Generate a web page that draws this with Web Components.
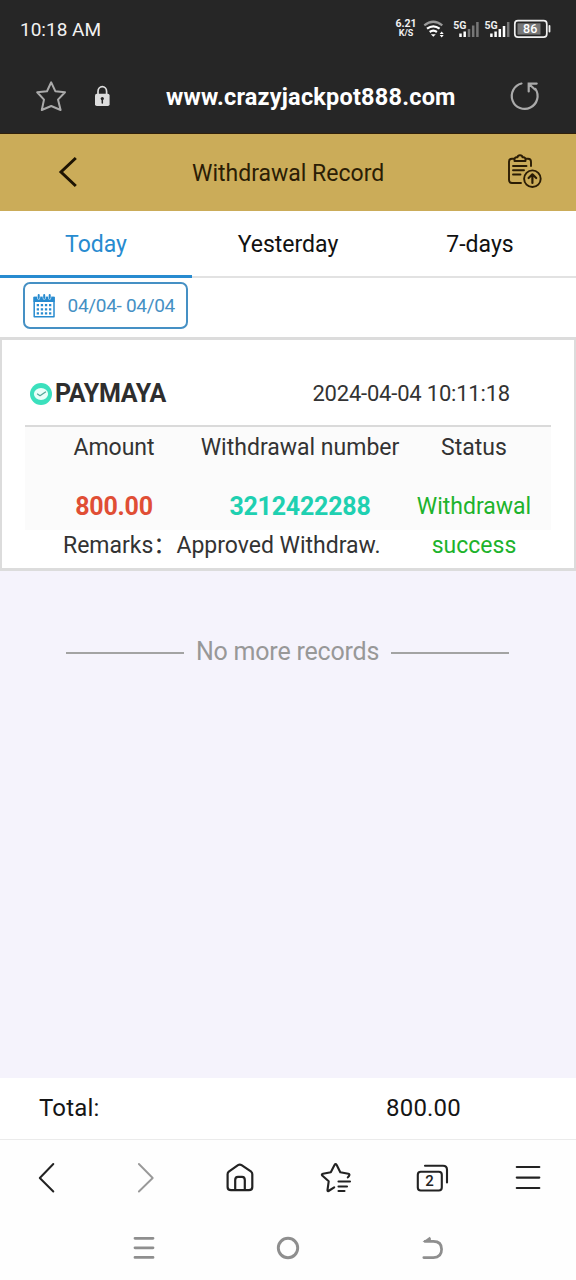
<!DOCTYPE html>
<html lang="en">
<head>
<meta charset="utf-8">
<title>Withdrawal Record</title>
<style>
html,body{margin:0;padding:0}
body{width:576px;height:1280px;overflow:hidden;font-family:Roboto,"Noto Sans CJK SC",sans-serif;background:#f5f3fc}
</style>
</head>
<body>
<record-app></record-app>
<script>
const define = (name, html) => {
  const t = document.createElement('template');
  t.innerHTML = html;
  customElements.define(name, class extends HTMLElement {
    constructor() {
      super();
      this.attachShadow({mode: 'open'}).appendChild(t.content.cloneNode(true));
    }
  });
};

const ICONS = {
  star: ['35 80 32 32', '<path d="M51.2 82.3L55.3 91.2 65 92.2 58 99.6 60.6 110 51.2 106 41.8 110 44 99.6 37.2 92.2 47 91.2Z" stroke="#aaa" stroke-width="2"/>'],
  lock: ['93 84 18 24', '<path d="M98 95V91.5a4.3 4.8 0 0 1 8.600 0V95" stroke="#ddd" stroke-width="1.700"/><rect x="95" y="93.800" width="14.600" height="12.200" rx="1.800" fill="#ddd"/><circle cx="102.300" cy="98.600" r="1.600" fill="#262626"/><path d="M102.300 98.500V103" stroke="#262626" stroke-width="1.500"/>'],
  reload: ['508 79 34 34', '<path d="M521.500 83.500A12.900 12.900 0 1 0 535.500 89" stroke="#aaa" stroke-width="2.200"/><path d="M528.700 91.500V83.600H536.700M529 84L535 89.500" stroke="#aaa" stroke-width="2.200" stroke-linejoin="miter"/>'],
  back: ['56 155 24 34', '<path d="M75.800 158L61 172 75.800 186" stroke="#1d1303" stroke-width="3" stroke-linecap="butt" stroke-linejoin="miter"/>'],
  upload: ['505 151 40 40', '<g stroke="#2b1d05" stroke-width="1.900"><path d="M514 157.700H512a3 3 0 0 0-3 3V179a3 3 0 0 0 3 3H521M526 157.700H528a3 3 0 0 1 3 3V165"/><path d="M514.500 160V158.500q0-2 2.200-2.200H517.500q.3-2 2.500-2 2.200 0 2.500 2H523.300q2.200.2 2.200 2.200V160Z"/><path d="M513 165H526.500M513 169.300H524M513 173.500H520.500"/><circle cx="532.400" cy="177.700" r="8.300"/><path d="M532.400 182V173.600M528.600 177L532.400 173.300 536.200 177" stroke-width="2.200"/></g>'],
  calendar: ['32 293 24 26', '<path d="M34.200 297.500H54V316.800H34.200Z" stroke="#278bd0" stroke-width="1.500"/><path d="M33.500 296.800H54.700V302H33.500Z" fill="#278bd0"/><path d="M38.700 295V298M44.200 295V298M49.700 295V298" stroke="#fff" stroke-width="3"/><path d="M38.700 295V298M44.200 295V298M49.700 295V298" stroke="#278bd0" stroke-width="2"/><path d="M36.700 305.200H53M36.700 309.300H53M36.700 313.400H53" stroke="#278bd0" stroke-width="2.300" stroke-dasharray="2.300 1.800" stroke-linecap="butt"/>'],
  maya: ['29 382 24 24', '<circle cx="41" cy="394" r="11" fill="#3be0bd"/><ellipse cx="41" cy="394" rx="7.100" ry="6" fill="#eafffa"/><path d="M37.500 394L40 395.700 45.500 392" stroke="#57a799" stroke-width="1.300"/>'],
  wifi: ['423 19 22 20', '<g stroke-linecap="butt"><path d="M424.300 25.300Q433.300 18.200 442.300 25.300" stroke="#999" stroke-width="2.200"/><path d="M427 28.700Q433.300 24 439.600 28.700M429.700 32Q433.300 29.300 436.900 32" stroke="#fff" stroke-width="2.200"/></g><path d="M430.800 34.200H435.800L433.300 36.800Z" fill="#fff"/><path d="M439.700 34L441.700 31.500 443.700 34ZM439.700 35L441.700 37.500 443.700 35Z" fill="#fff"/>'],
  signal1: ['453 18 27 20', '<text x="453.300" y="28.800" font-size="10.500" font-weight="700" fill="#eee" textLength="13.200" lengthAdjust="spacingAndGlyphs">5G</text><g stroke-width="2.500" stroke-linecap="butt"><path d="M460.500 33.500V37M464.700 31.500V37" stroke="#fff"/><path d="M469 29V37M473.200 25.500V37M477.400 22V37" stroke="#777"/></g>'],
  signal2: ['484 18 27 20', '<text x="484.500" y="28.800" font-size="10.500" font-weight="700" fill="#eee" textLength="13.200" lengthAdjust="spacingAndGlyphs">5G</text><g stroke-width="2.500" stroke-linecap="butt"><path d="M491.400 33.500V37M495.600 31.500V37M499.800 29V37M504 26V37" stroke="#fff"/><path d="M508.200 22V37" stroke="#777"/></g>'],
  battery: ['513 19 38 20', '<rect x="514.800" y="20.700" width="32" height="16.500" rx="3.200" stroke="#eee" stroke-width="1.700"/><rect x="517.500" y="23.300" width="23" height="11.300" fill="#777"/><path d="M549.500 26V31.500" stroke="#eee" stroke-width="1.800"/><text x="530.200" y="33.400" font-size="12.500" font-weight="500" fill="#fff" text-anchor="middle">86</text>'],
  prev: ['36 1161 20 34', '<path d="M53.300 1164L39.800 1178 53.300 1191.500" stroke="#222" stroke-width="2"/>'],
  next: ['136 1161 20 34', '<path d="M138.900 1164L152.700 1178 138.900 1191.500" stroke="#999" stroke-width="1.900"/>'],
  home: ['224 1162 32 32', '<g stroke="#222" stroke-width="2.200"><path d="M227.600 1174.200Q227.600 1172.700 228.800 1171.700L238 1165.200Q239.800 1164 241.600 1165.200L251.200 1171.700Q252.300 1172.700 252.300 1174.200V1187Q252.300 1190.200 249 1190.200H231Q227.600 1190.200 227.600 1187Z"/><path d="M235.200 1190V1180Q235.200 1176.800 238 1176.800H242Q244.800 1176.800 244.800 1180V1190"/></g>'],
  bookmarks: ['319 1161 34 34', '<g stroke="#222" stroke-width="2.100"><path d="M334.200 1187.300L328.500 1191Q327.300 1191.500 327.500 1190L328.700 1181.300 322.200 1175.500Q321.200 1174.200 323 1173.700L330.800 1172.300 334.500 1165Q335.600 1163.300 336.700 1165L340.300 1172.300 348.300 1173.700Q350.200 1174.200 349 1176L347.800 1177.400"/><path d="M338.500 1181.500H350M338.500 1186.500H347M338.500 1191H344.500"/></g>'],
  tabs: ['414 1162 36 32', '<g stroke="#222" stroke-width="2.100"><rect x="417.800" y="1171.800" width="24" height="18.700" rx="3"/><path d="M425 1165.700H443Q447 1165.700 447 1169.700V1182.500"/></g><text x="429.600" y="1186.300" font-size="15" font-weight="500" fill="#222" text-anchor="middle">2</text>'],
  menu: ['513 1163 30 30', '<path d="M516.800 1167H539.300M516.800 1177.600H539.300M516.800 1188H539.300" stroke="#222" stroke-width="2.200"/>'],
  recents: ['132 1234 24 28', '<path d="M135 1238.300H153M135 1247.800H153M135 1257.400H153" stroke="#8e8e8e" stroke-width="2.800"/>'],
  circle: ['274 1234 28 28', '<circle cx="288" cy="1248" r="9.700" stroke="#8e8e8e" stroke-width="2.900"/>'],
  undo: ['419 1234 26 28', '<path d="M423.800 1257.600H433.500Q441.600 1257.600 441.600 1249.300 441.600 1241.400 433.500 1241.400H425" stroke="#8e8e8e" stroke-width="2.700"/><path d="M422.500 1241.900L429.800 1236.800 431 1238.500 430.500 1242Z" fill="#8e8e8e"/>']
};
customElements.define('ui-icon', class extends HTMLElement {
  constructor() {
    super();
    this.attachShadow({mode: 'open'});
  }
  connectedCallback() {
    const [box, art] = ICONS[this.getAttribute('name')];
    const [, , w, h] = box.split(' ');
    this.shadowRoot.innerHTML = `<style>:host{display:block;flex:none;width:${w}px;height:${h}px}svg{display:block}</style>
<svg width="${w}" height="${h}" viewBox="${box}" fill="none" stroke-linecap="round" stroke-linejoin="round" font-family="Roboto, sans-serif">${art}</svg>`;
  }
});

define('status-bar', `<style>
:host{display:flex;box-sizing:border-box;height:60px;background:#262626;color:#f2f2f2;padding:19px 25px 0 20px;align-items:flex-start}
.time{font-size:19px;line-height:21px;flex:1}
.speed{width:22px;text-align:center;font-size:10.500px;font-weight:700;line-height:11px;margin:-1px 6px 0 0}
.speed small{display:block;font-size:9px;line-height:9px;font-weight:700}
.a{margin:-1px 4px 0 8px}.b{margin:-1px 2px 0 0}
</style><span class="time">10:18 AM</span><span class="speed">6.21<small>K/S</small></span><ui-icon name="wifi"></ui-icon><ui-icon class="a" name="signal1"></ui-icon><ui-icon class="b" name="signal2"></ui-icon><ui-icon name="battery"></ui-icon>`);

define('address-bar', `<style>
:host{display:flex;box-sizing:border-box;height:74px;background:#262626;border-bottom:1px solid #30200a;color:#fff;align-items:center;padding:0 34px 1px 35px}
.lock{margin-left:26px}
.url{flex:1;padding:2px 0 0 55px;font-size:23.500px;letter-spacing:.2px;font-weight:700;white-space:nowrap}
</style><ui-icon name="star"></ui-icon><ui-icon class="lock" name="lock"></ui-icon><span class="url"><slot></slot></span><ui-icon name="reload"></ui-icon>`);

define('page-header', `<style>
:host{display:flex;box-sizing:border-box;height:77px;background:#cbac59;color:#2b1d05;align-items:center;padding:0 31px 2px 56px}
span{flex:1;font-size:23px;padding:3px 0 0 112px}
</style><ui-icon name="back"></ui-icon><span><slot></slot></span><ui-icon name="upload"></ui-icon>`);

define('period-tabs', `<style>
:host{display:grid;grid-template-columns:repeat(3,1fr);height:67px;background:#fff}
::slotted(*){box-sizing:border-box;height:67px;border-bottom:2px solid #e2e2e2;text-align:center;line-height:68px;font-size:23px;color:#111}
::slotted([selected]){border-bottom:3px solid #278bd0;color:#278bd0}
</style><slot></slot>`);

define('date-filter', `<style>
:host{display:block;box-sizing:border-box;height:59px;background:#fff;padding:4px 0 0 22.500px}
div{display:flex;box-sizing:border-box;width:165px;height:47px;border:2px solid #4590c4;border-radius:7px;align-items:center;padding-left:7px;color:#4590c4;font-size:19px;letter-spacing:-.3px;white-space:nowrap}
span{margin-left:12px;margin-bottom:1px}
</style><div><ui-icon name="calendar"></ui-icon><span><slot></slot></span></div>`);

define('record-card', `<style>
:host{display:block;box-sizing:border-box;height:234px;background:#fff;border:solid #dcdcdc;border-width:3px 2px 3px 2px;padding:0 23px;font-size:23px;color:#333;white-space:nowrap}
header{display:flex;border-bottom:2px solid #dadada;align-items:center;box-sizing:border-box;height:87px;padding:23px 0 0 4px}
b{font-size:25px;letter-spacing:-.25px;font-weight:700;margin:0 0 2px 2px;color:#2e2e2e}
time{font-size:22px;letter-spacing:-.2px;margin:0 41px 1px auto}
.grid{display:grid;grid-template-columns:178px 194px 154px;grid-template-rows:41px 19px 39px 39px;background:linear-gradient(#fbfbfb 103px,#fff 103px)}
.grid>*{display:flex;justify-content:center;line-height:39px}
.grid>.head{line-height:41px}
.gap{grid-column:1/4}
.grid>.amount,.grid>.number{font-weight:700;font-size:25px;letter-spacing:-.22px}
.amount{color:#e04e35}
.number{color:#1fd0b1}
.status{grid-row:3/5;grid-column:3;color:#1db32c;flex-direction:column;align-items:center}
.grid>.status{justify-content:flex-start}
.grid>.remarks{grid-column:1/3;grid-row:4;justify-content:flex-start;padding-left:38px}
</style>
<header><ui-icon name="maya"></ui-icon><b><slot name="method"></slot></b><time><slot name="time"></slot></time></header>
<div class="grid"><span class="head">Amount</span><span class="head">Withdrawal number</span><span class="head">Status</span><i class="gap"></i>
<span class="amount"><slot name="amount"></slot></span><span class="number"><slot name="number"></slot></span><span class="status"><span>Withdrawal</span><span>success</span></span>
<span class="remarks"><span>Remarks：</span><span><slot name="remarks"></slot></span></span></div>`);

define('list-end', `<style>
:host{display:flex;flex:1;align-items:flex-start;padding:67px 67px 0 66px;font-size:25px;letter-spacing:-.2px;line-height:27px;color:#989898}
i{flex:1;height:2px;background:#a3a3a3;margin-top:14px}
span{margin:0 12px}
</style><i></i><span><slot></slot></span><i></i>`);

define('total-row', `<style>
:host{display:flex;box-sizing:border-box;height:62px;background:#fff;border-bottom:1px solid #ebebeb;align-items:center;justify-content:space-between;padding:0 115px 1px 39px;font-size:24px;letter-spacing:.2px;color:#151515}
</style><slot></slot>`);

define('browser-nav', `<style>
:host{display:grid;grid-template-columns:repeat(6,96px);height:76px;background:#fefefe;align-items:center;justify-items:center}
.p{margin-left:-4px}.n{margin-left:4px}
</style><ui-icon class="p" name="prev"></ui-icon><ui-icon class="n" name="next"></ui-icon><ui-icon name="home"></ui-icon><ui-icon name="bookmarks"></ui-icon><ui-icon name="tabs"></ui-icon><ui-icon name="menu"></ui-icon>`);

define('system-nav', `<style>
:host{display:grid;grid-template-columns:repeat(3,144px);justify-content:center;height:64px;background:#fefefe;align-items:center;justify-items:center}
</style><ui-icon name="recents"></ui-icon><ui-icon name="circle"></ui-icon><ui-icon name="undo"></ui-icon>`);

define('record-app', `<style>
:host{display:flex;flex-direction:column;width:576px;height:1280px}
</style>
<status-bar></status-bar>
<address-bar>www.crazyjackpot888.com</address-bar>
<page-header>Withdrawal Record</page-header>
<period-tabs><span selected>Today</span><span>Yesterday</span><span>7-days</span></period-tabs>
<date-filter>04/04- 04/04</date-filter>
<record-card><span slot="method">PAYMAYA</span><span slot="time">2024-04-04 10:11:18</span><span slot="amount">800.00</span><span slot="number">3212422288</span><span slot="remarks">Approved Withdraw.</span></record-card>
<list-end>No more records</list-end>
<total-row><span>Total:</span><span>800.00</span></total-row>
<browser-nav></browser-nav>
<system-nav></system-nav>`);
</script>
</body>
</html>
